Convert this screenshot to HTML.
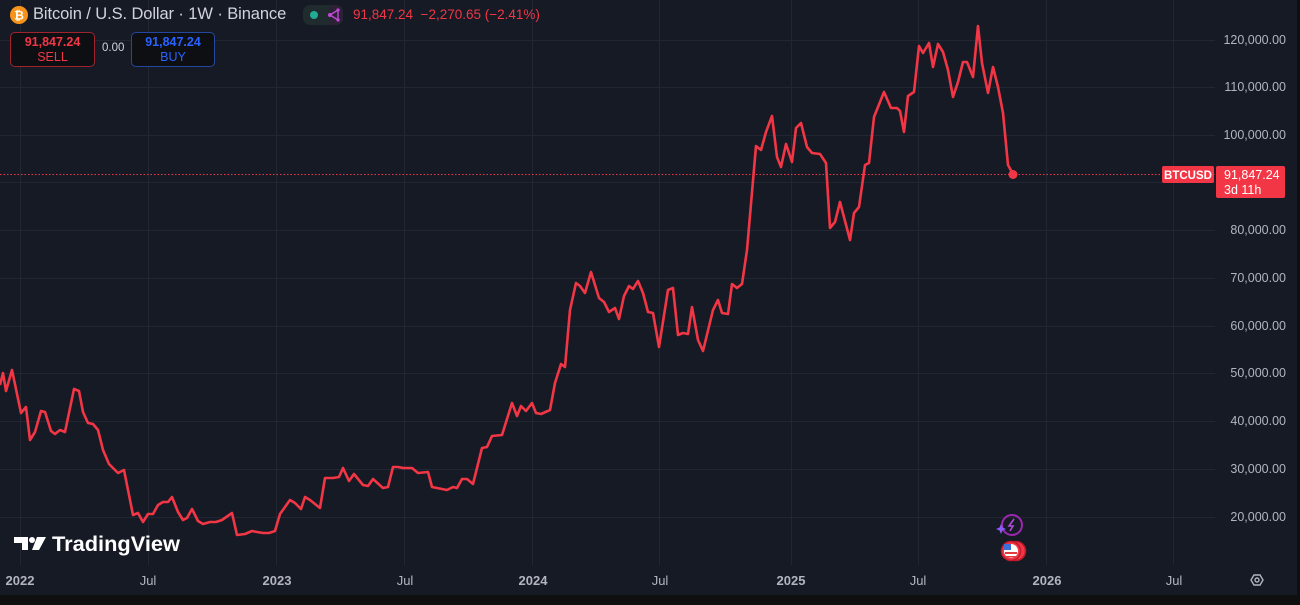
<!DOCTYPE html>
<html><head><meta charset="utf-8"><style>
body{margin:0;width:1300px;height:605px;background:#161a25;overflow:hidden;font-family:"Liberation Sans",sans-serif;position:relative}
.t{position:absolute;white-space:nowrap}
</style></head><body>
<svg width="1300" height="605" style="position:absolute;left:0;top:0">
<rect x="0" y="0" width="1300" height="605" fill="#161a25"/>
<g stroke="#222633" stroke-width="1">
<line x1="0" y1="40.5" x2="1215" y2="40.5"/><line x1="0" y1="87.5" x2="1215" y2="87.5"/><line x1="0" y1="135.5" x2="1215" y2="135.5"/><line x1="0" y1="182.5" x2="1215" y2="182.5"/><line x1="0" y1="230.5" x2="1215" y2="230.5"/><line x1="0" y1="278.5" x2="1215" y2="278.5"/><line x1="0" y1="326.5" x2="1215" y2="326.5"/><line x1="0" y1="373.5" x2="1215" y2="373.5"/><line x1="0" y1="421.5" x2="1215" y2="421.5"/><line x1="0" y1="469.5" x2="1215" y2="469.5"/><line x1="0" y1="517.5" x2="1215" y2="517.5"/>
<line x1="20.5" y1="0" x2="20.5" y2="565"/><line x1="148.5" y1="0" x2="148.5" y2="565"/><line x1="276.5" y1="0" x2="276.5" y2="565"/><line x1="404.5" y1="0" x2="404.5" y2="565"/><line x1="532.5" y1="0" x2="532.5" y2="565"/><line x1="659.5" y1="0" x2="659.5" y2="565"/><line x1="791.5" y1="0" x2="791.5" y2="565"/><line x1="918.5" y1="0" x2="918.5" y2="565"/><line x1="1046.5" y1="0" x2="1046.5" y2="565"/><line x1="1173.5" y1="0" x2="1173.5" y2="565"/>
</g>
<line x1="0" y1="174.5" x2="1215" y2="174.5" stroke="#f23645" stroke-width="1" stroke-dasharray="1.5 2"/>
<polyline fill="none" stroke="#f23645" stroke-width="2.6" stroke-linejoin="round" points="0,385 3,373 6,391 12,370 21,413 26,407 30,440 35,432 41,411 45,412 51,431 55,434 60,430 65,432 74,389 79,391 83,412 88,423 93,424 98,430 103,450 109,464 118,473 124,470 133,515 138,513 143,522 148,514 153,514 158,505 163,502 168,502 172,497 178,512 183,520 187,518 192,509 198,521 203,524 210,522 216,522 222,520 232,513 237,535 245,534 252,531 257,532 263,533 269,533 275,531 280,514 290,500 295,503 301,509 305,497 310,500 320,508 325,478 333,478 339,477 343,468 349,481 354,474 363,485 368,486 373,479 383,488 388,487 393,467 398,467 403,468 412,468 418,473 428,472 432,487 447,490 453,487 457,488 462,479 467,479 473,484 482,448 487,447 492,436 502,435 512,403 517,416 521,406 526,411 532,403 536,413 541,414 550,410 555,383 561,364 565,367 570,310 576,283 580,286 585,293 591,272 599,298 604,302 609,312 615,308 619,319 624,296 629,286 633,289 638,281 643,293 648,312 653,313 659,347 668,290 673,288 678,335 683,333 688,334 692,307 698,340 703,351 713,310 718,300 722,313 728,314 732,284 737,288 742,284 747,250 756,146 761,150 766,132 772,116 777,157 781,167 786,144 792,162 796,128 801,123 807,147 812,153 820,154 826,163 830,228 835,222 840,202 850,240 854,213 859,207 865,165 869,163 874,117 884,92 891,108 897,108 900,111 904,132 908,96 914,92 919,46 923,53 929,43 933,67 938,44 943,52 948,70 953,97 958,82 963,62 967,62 973,77 978,26 982,63 988,93 993,67 998,87 1003,113 1008,165 1013,174"/>
<circle cx="1013" cy="174.5" r="4.5" fill="#f23645"/>
<g fill="#b2b5be" font-family="Liberation Sans" font-size="12.5" text-anchor="end">
<text x="1286" y="44">120,000.00</text><text x="1286" y="91">110,000.00</text><text x="1286" y="139">100,000.00</text><text x="1286" y="234">80,000.00</text><text x="1286" y="282">70,000.00</text><text x="1286" y="330">60,000.00</text><text x="1286" y="377">50,000.00</text><text x="1286" y="425">40,000.00</text><text x="1286" y="473">30,000.00</text><text x="1286" y="521">20,000.00</text>
</g>
<g fill="#b2b5be" font-family="Liberation Sans" font-size="13" text-anchor="middle" font-weight="bold">
<text x="20" y="585">2022</text><text x="148" y="585" font-weight="normal">Jul</text><text x="277" y="585">2023</text><text x="405" y="585" font-weight="normal">Jul</text><text x="533" y="585">2024</text><text x="660" y="585" font-weight="normal">Jul</text><text x="791" y="585">2025</text><text x="918" y="585" font-weight="normal">Jul</text><text x="1047" y="585">2026</text><text x="1174" y="585" font-weight="normal">Jul</text>
</g>
<polygon points="1251,580 1254,575 1260,575 1263,580 1260,585 1254,585" fill="none" stroke="#b2b5be" stroke-width="1.4"/>
<circle cx="1257" cy="580" r="2" fill="none" stroke="#b2b5be" stroke-width="1.4"/>
<rect x="0" y="595" width="1300" height="10" fill="#0f0f0f"/>
<rect x="1297" y="0" width="3" height="605" fill="#0f0f0f"/>
<rect x="1162" y="166" width="52" height="17" rx="2" fill="#f23645"/>
<text x="1188" y="179" fill="#fff" font-size="11.5" font-weight="bold" text-anchor="middle">BTCUSD</text>
<rect x="1216" y="166" width="69" height="32" rx="2" fill="#f23645"/>
<text x="1224" y="179" fill="#fff" font-size="12.5">91,847.24</text>
<text x="1224" y="194" fill="#fff" font-size="12.5">3d 11h</text>
<circle cx="1012" cy="525" r="10" fill="none" stroke="#9c27b0" stroke-width="2"/>
<path d="M1014,519 L1009,526 L1013,526 L1010,531" fill="none" stroke="#b04bd8" stroke-width="1.6"/>
<path d="M1001,524 l1.5,3.5 3.5,1.5 -3.5,1.5 -1.5,3.5 -1.5,-3.5 -3.5,-1.5 3.5,-1.5z" fill="#8c5cf6"/>
<circle cx="1016" cy="551" r="9.5" fill="#f23645" stroke="#c21a2a" stroke-width="1.5"/>
<circle cx="1011" cy="551" r="9.5" fill="#f23645" stroke="#c21a2a" stroke-width="1.5"/>
<circle cx="1011" cy="551" r="7" fill="#fff"/>
<rect x="1004" y="544" width="7" height="6" fill="#3d6fd8"/>
<rect x="1005" y="552" width="12" height="2" fill="#e0393e"/>
<rect x="1006" y="556" width="10" height="1.5" fill="#e0393e"/>
<g fill="#fff">
<path d="M14,537 h14 v13 h-6 v-7 h-8z"/><circle cx="32" cy="540" r="3"/><path d="M37,537 h9 l-7,13 h-7z"/>
</g>
<text x="52" y="551" fill="#fff" font-size="21" font-weight="bold" font-family="Liberation Sans" textLength="128" lengthAdjust="spacingAndGlyphs">TradingView</text>
</svg>
<svg width="18" height="18" style="position:absolute;left:10px;top:6px"><circle cx="9" cy="9" r="9" fill="#f7931a"/><text x="9" y="13.5" fill="#fff" font-size="12" font-weight="bold" text-anchor="middle">₿</text></svg>
<div class="t" style="left:33px;top:5px;font-size:16.5px;color:#d1d4dc;letter-spacing:-0.1px">Bitcoin / U.S. Dollar · 1W · Binance</div>
<div class="t" style="left:303px;top:5px;width:40px;height:20px;border-radius:7px;background:#1f2b2d"></div>
<div style="position:absolute;left:329px;top:5px;width:14px;height:20px;background:#2c2236;border-radius:0 7px 7px 0"></div>
<div style="position:absolute;left:310px;top:11px;width:8px;height:8px;border-radius:50%;background:#22ab94"></div>
<svg width="14" height="14" style="position:absolute;left:327px;top:8px"><path d="M3,7 L11,2 M3,7 L11,12 M11,2 L11,12" stroke="#c248d8" stroke-width="1.4" fill="none"/><circle cx="3" cy="7" r="2" fill="#c248d8"/><circle cx="11" cy="2" r="1.6" fill="#c248d8"/><circle cx="11" cy="12" r="1.6" fill="#c248d8"/></svg>
<div class="t" style="left:353px;top:7px;font-size:13.5px;color:#f23645">91,847.24 &nbsp;−2,270.65 (−2.41%)</div>
<div style="position:absolute;left:10px;top:32px;width:85px;height:35px;box-sizing:border-box;border:1px solid #a1232e;border-radius:5px;background:#0e0f13;color:#f23645;text-align:center;font-size:12.5px;line-height:15px;padding-top:2px"><b>91,847.24</b><br>SELL</div>
<div class="t" style="left:102px;top:42px;font-size:11.5px;color:#d1d4dc">0.00</div>
<div style="position:absolute;left:131px;top:32px;width:84px;height:35px;box-sizing:border-box;border:1px solid #2448a0;border-radius:5px;background:#0e0f13;color:#2962ff;text-align:center;font-size:12.5px;line-height:15px;padding-top:2px"><b>91,847.24</b><br>BUY</div>
</body></html>
